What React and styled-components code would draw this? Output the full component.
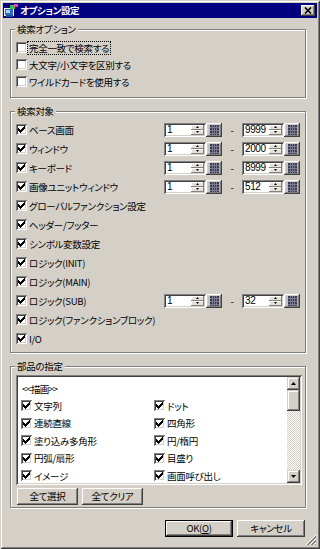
import React from 'react';
import styled, { createGlobalStyle } from 'styled-components';

const FONT = `"Noto Sans CJK JP", "Noto Sans", sans-serif`;
const BG = '#d4d0c8';
const RAISED = `inset -1px -1px 0 #404040, inset 1px 1px 0 #fff, inset -2px -2px 0 #808080, inset 2px 2px 0 ${BG}`;
const SUNKEN = `inset 1px 1px 0 #808080, inset -1px -1px 0 #fff, inset 2px 2px 0 #404040, inset -2px -2px 0 ${BG}`;

const Global = createGlobalStyle`
  html, body { margin: 0; padding: 0; background: ${BG}; }
  body {
    font-family: ${FONT};
    font-size: 9.5px;
    letter-spacing: -0.3px;
    color: #000;
    font-feature-settings: "palt" 1;
  }
  * { box-sizing: border-box; }
`;

const Window = styled.div`
  position: relative;
  width: 320px;
  height: 549px;
  background: ${BG};
  padding: 3px;
  box-shadow: inset 1px 1px 0 ${BG}, inset -1px -1px 0 #404040, inset 2px 2px 0 #fff, inset -2px -2px 0 #808080;
  display: flex;
  flex-direction: column;
  overflow: hidden;
`;

const TitleBar = styled.div`
  height: 15px;
  flex: none;
  background: #000080;
  display: flex;
  align-items: center;
  padding: 0 2px 0 1px;
  gap: 2px;
`;

const TitleText = styled.span`
  color: #fff;
  font-weight: bold;
  font-size: 9.5px;
  letter-spacing: -0.4px;
  line-height: 15px;
  flex: 1;
  white-space: nowrap;
`;

const CloseButton = styled.div`
  width: 14px;
  height: 11px;
  background: ${BG};
  box-shadow: ${RAISED};
  display: flex;
  align-items: center;
  justify-content: center;
`;

const Body = styled.div`
  flex: 1;
  display: flex;
  flex-direction: column;
  padding: 0 11px 0 7px;
`;

const Group = styled.fieldset`
  margin: ${p => p.$mt}px 0 0;
  padding: ${p => p.$pt}px ${p => p.$pr ?? 5}px ${p => p.$pb}px 5px;
  border: 1px solid #808080;
  box-shadow: inset 1px 1px 0 #fff, 1px 1px 0 #fff;
  width: 296px;
  min-width: 0;
`;

const Legend = styled.legend`
  margin-left: -1px;
  padding: 0 2px;
  line-height: 12px;
  background: ${BG};
  white-space: nowrap;
`;

const Row = styled.div`
  display: flex;
  align-items: center;
  height: ${p => p.$h}px;
  white-space: nowrap;
`;

const Box = styled.span`
  width: 11px;
  height: 11px;
  flex: none;
  background: #fff;
  box-shadow: ${SUNKEN};
  display: flex;
  align-items: center;
  justify-content: center;
`;

const Label = styled.span`
  margin-left: ${p => (p.$focus ? 1 : 2)}px;
  line-height: 12px;
  padding: 0 ${p => (p.$focus ? 1 : 0)}px;
  outline: ${p => (p.$focus ? '1px dotted #000' : 'none')};
  white-space: nowrap;
`;

const Spins = styled.div`
  margin-left: auto;
  display: flex;
  align-items: center;
`;

const Edit = styled.div`
  width: 42px;
  height: 14px;
  padding: 2px;
  background: #fff;
  box-shadow: ${SUNKEN};
  display: flex;
`;

const EditText = styled.span`
  flex: 1;
  font-family: "Liberation Sans", Arial, sans-serif;
  font-size: 10px;
  line-height: 10px;
  letter-spacing: -0.4px;
  padding-left: 1px;
`;

const SpinCol = styled.div`
  width: 13px;
  display: flex;
  flex-direction: column;
`;

const SpinBtn = styled.div`
  flex: 1;
  background: #e4e1da;
  box-shadow: inset -1px -1px 0 #808080, inset 1px 1px 0 #fff;
  display: flex;
  align-items: center;
  justify-content: center;
`;

const CalButton = styled.div`
  width: 16px;
  height: 14px;
  background: linear-gradient(90deg, #c4c4cc, #aeaeb8);
  box-shadow: ${RAISED};
  display: flex;
  align-items: center;
  justify-content: center;
`;

const Dash = styled.span`
  width: 20px;
  text-align: center;
  line-height: 12px;
`;

const ListBox = styled.div`
  width: 286px;
  height: 110px;
  padding: 2px;
  background: #fff;
  box-shadow: ${SUNKEN};
  display: flex;
`;

const ListContent = styled.div`
  flex: 1;
  overflow: hidden;
  padding: 4px 0 0 3px;
`;

const ListHeader = styled.div`
  height: 16px;
  line-height: 16px;
  padding-left: 1px;
  letter-spacing: -0.8px;
`;

const ListGrid = styled.div`
  display: grid;
  grid-template-columns: 133px 1fr;
  grid-auto-rows: 17.5px;
`;

const ScrollBar = styled.div`
  width: 13px;
  display: flex;
  flex-direction: column;
`;

const ScrollBtn = styled.div`
  height: ${p => p.$h}px;
  flex: none;
  background: ${BG};
  box-shadow: inset -1px -1px 0 #404040, inset 1px 1px 0 ${BG}, inset -2px -2px 0 #808080, inset 2px 2px 0 #fff;
  display: flex;
  align-items: center;
  justify-content: center;
`;

const Track = styled.div`
  flex: 1;
  background: repeating-conic-gradient(#fff 0 25%, ${BG} 0 50%) 0 0 / 2px 2px;
`;

const ButtonRow = styled.div`
  display: flex;
  gap: 4px;
  margin-top: ${p => p.$mt}px;
  padding-left: ${p => p.$pl ?? 0}px;
  padding-right: ${p => p.$pr ?? 0}px;
  justify-content: ${p => (p.$end ? 'flex-end' : 'flex-start')};
`;

const Button = styled.div`
  width: ${p => p.$w}px;
  height: 17px;
  background: ${BG};
  box-shadow: ${p =>
    p.$default
      ? `inset 0 0 0 1px #000, inset -2px -2px 0 #404040, inset 2px 2px 0 #fff, inset -3px -3px 0 #808080`
      : RAISED};
  display: flex;
  align-items: center;
  justify-content: center;
  line-height: 15px;
  white-space: nowrap;
`;

const Grip = styled.svg`
  position: absolute;
  right: 3px;
  bottom: 3px;
`;

const CheckMark = () => (
  <svg width="7" height="7" viewBox="0 0 7 7" shapeRendering="crispEdges">
    {[2, 3, 4, 3, 2, 1, 0].map((y, x) => (
      <rect key={x} x={x} y={y} width="1" height="3" fill="#000" />
    ))}
  </svg>
);

const Check = ({ checked, label, focus, h = 17, children }) => (
  <Row $h={h}>
    <Box>{checked && <CheckMark />}</Box>
    <Label $focus={focus}>{label}</Label>
    {children}
  </Row>
);

const Arrow = ({ up, w = 3, h = 2 }) => (
  <svg width={w} height={h} viewBox={`0 0 ${w} ${h}`}>
    <polygon
      points={up ? `0,${h} ${w / 2},0 ${w},${h}` : `0,0 ${w},0 ${w / 2},${h}`}
      fill="#000"
    />
  </svg>
);

const GridIcon = () => (
  <svg width="9" height="10" viewBox="0 0 9 10" shapeRendering="crispEdges">
    <rect width="9" height="10" fill="#3a3a48" />
    {[2, 4, 6].map(x => (
      <rect key={'v' + x} x={x} y="0" width="1" height="10" fill="#7a7a90" />
    ))}
    {[2, 5, 8].map(y => (
      <rect key={'h' + y} x="0" y={y} width="9" height="1" fill="#7a7a90" />
    ))}
  </svg>
);

const SpinEdit = ({ value }) => (
  <>
    <Edit>
      <EditText>{value}</EditText>
      <SpinCol>
        <SpinBtn><Arrow up /></SpinBtn>
        <SpinBtn><Arrow /></SpinBtn>
      </SpinCol>
    </Edit>
    <CalButton><GridIcon /></CalButton>
  </>
);

const targets = [
  { label: 'ベース画面', range: ['1', '9999'] },
  { label: 'ウィンドウ', range: ['1', '2000'] },
  { label: 'キーボード', range: ['1', '8999'] },
  { label: '画像ユニットウィンドウ', range: ['1', '512'] },
  { label: 'グローバルファンクション設定' },
  { label: 'ヘッダー/フッター' },
  { label: 'シンボル変数設定' },
  { label: 'ロジック(INIT)' },
  { label: 'ロジック(MAIN)' },
  { label: 'ロジック(SUB)', range: ['1', '32'] },
  { label: 'ロジック(ファンクションブロック)' },
  { label: 'I/O' },
];

const parts = [
  '文字列', 'ドット',
  '連続直線', '四角形',
  '塗り込み多角形', '円/楕円',
  '円弧/扇形', '目盛り',
  'イメージ', '画面呼び出し',
];

const TitleIcon = () => (
  <svg width="14" height="13" viewBox="0 0 14 13" shapeRendering="crispEdges">
    <rect x="0" y="4" width="10" height="8" fill="#e8f0ff" />
    <rect x="1" y="5" width="8" height="6" fill="#2f6cc0" />
    <rect x="2" y="6" width="4" height="3" fill="#a8d4ff" />
    <rect x="6" y="1" width="5" height="4" fill="#38c040" />
    <rect x="10" y="0" width="4" height="3" fill="#e040b8" />
    <rect x="2" y="11" width="7" height="2" fill="#1c4f96" />
  </svg>
);

export default function App() {
  return (
    <>
      <Global />
      <Window>
        <TitleBar>
          <TitleIcon />
          <TitleText>オプション設定</TitleText>
          <CloseButton>
            <svg width="8" height="7" viewBox="0 0 8 7">
              <path d="M1 0.5 L7 6.5 M7 0.5 L1 6.5" stroke="#000" strokeWidth="1.6" />
            </svg>
          </CloseButton>
        </TitleBar>
        <Body>
          <Group $mt={5} $pt={4} $pb={7}>
            <Legend>検索オプション</Legend>
            <Check label="完全一致で検索する" focus />
            <Check label="大文字/小文字を区別する" />
            <Check label="ワイルドカードを使用する" />
          </Group>

          <Group $mt={7} $pt={3} $pb={4}>
            <Legend>検索対象</Legend>
            {targets.map(t => (
              <Check key={t.label} label={t.label} checked h={19}>
                {t.range && (
                  <Spins>
                    <SpinEdit value={t.range[0]} />
                    <Dash>-</Dash>
                    <SpinEdit value={t.range[1]} />
                  </Spins>
                )}
              </Check>
            ))}
          </Group>

          <Group $mt={7} $pt={3} $pb={2} $pr={3}>
            <Legend>部品の指定</Legend>
            <ListBox>
              <ListContent>
                <ListHeader>&lt;&lt;描画&gt;&gt;</ListHeader>
                <ListGrid>
                  {parts.map(p => (
                    <Check key={p} label={p} checked h={17.5} />
                  ))}
                </ListGrid>
              </ListContent>
              <ScrollBar>
                <ScrollBtn $h={13}><Arrow up w={5} h={3} /></ScrollBtn>
                <ScrollBtn $h={21} />
                <Track />
                <ScrollBtn $h={13}><Arrow w={5} h={3} /></ScrollBtn>
              </ScrollBar>
            </ListBox>
            <ButtonRow $mt={3} $pl={1}>
              <Button $w={61}>全て選択</Button>
              <Button $w={61}>全てクリア</Button>
            </ButtonRow>
          </Group>

          <ButtonRow $mt={12} $end $pr={1}>
            <Button $w={68} $default>OK(<u>O</u>)</Button>
            <Button $w={68}>キャンセル</Button>
          </ButtonRow>
        </Body>
        <Grip width="12" height="12" viewBox="0 0 12 12" shapeRendering="crispEdges">
          {[0, 4, 8].map(o => (
            <g key={o}>
              <line x1={11} y1={o + 1} x2={o + 1} y2={11} stroke="#fff" />
              <line x1={11} y1={o + 2} x2={o + 2} y2={11} stroke="#808080" />
              <line x1={11} y1={o + 3} x2={o + 3} y2={11} stroke="#808080" />
            </g>
          ))}
        </Grip>
      </Window>
    </>
  );
}
